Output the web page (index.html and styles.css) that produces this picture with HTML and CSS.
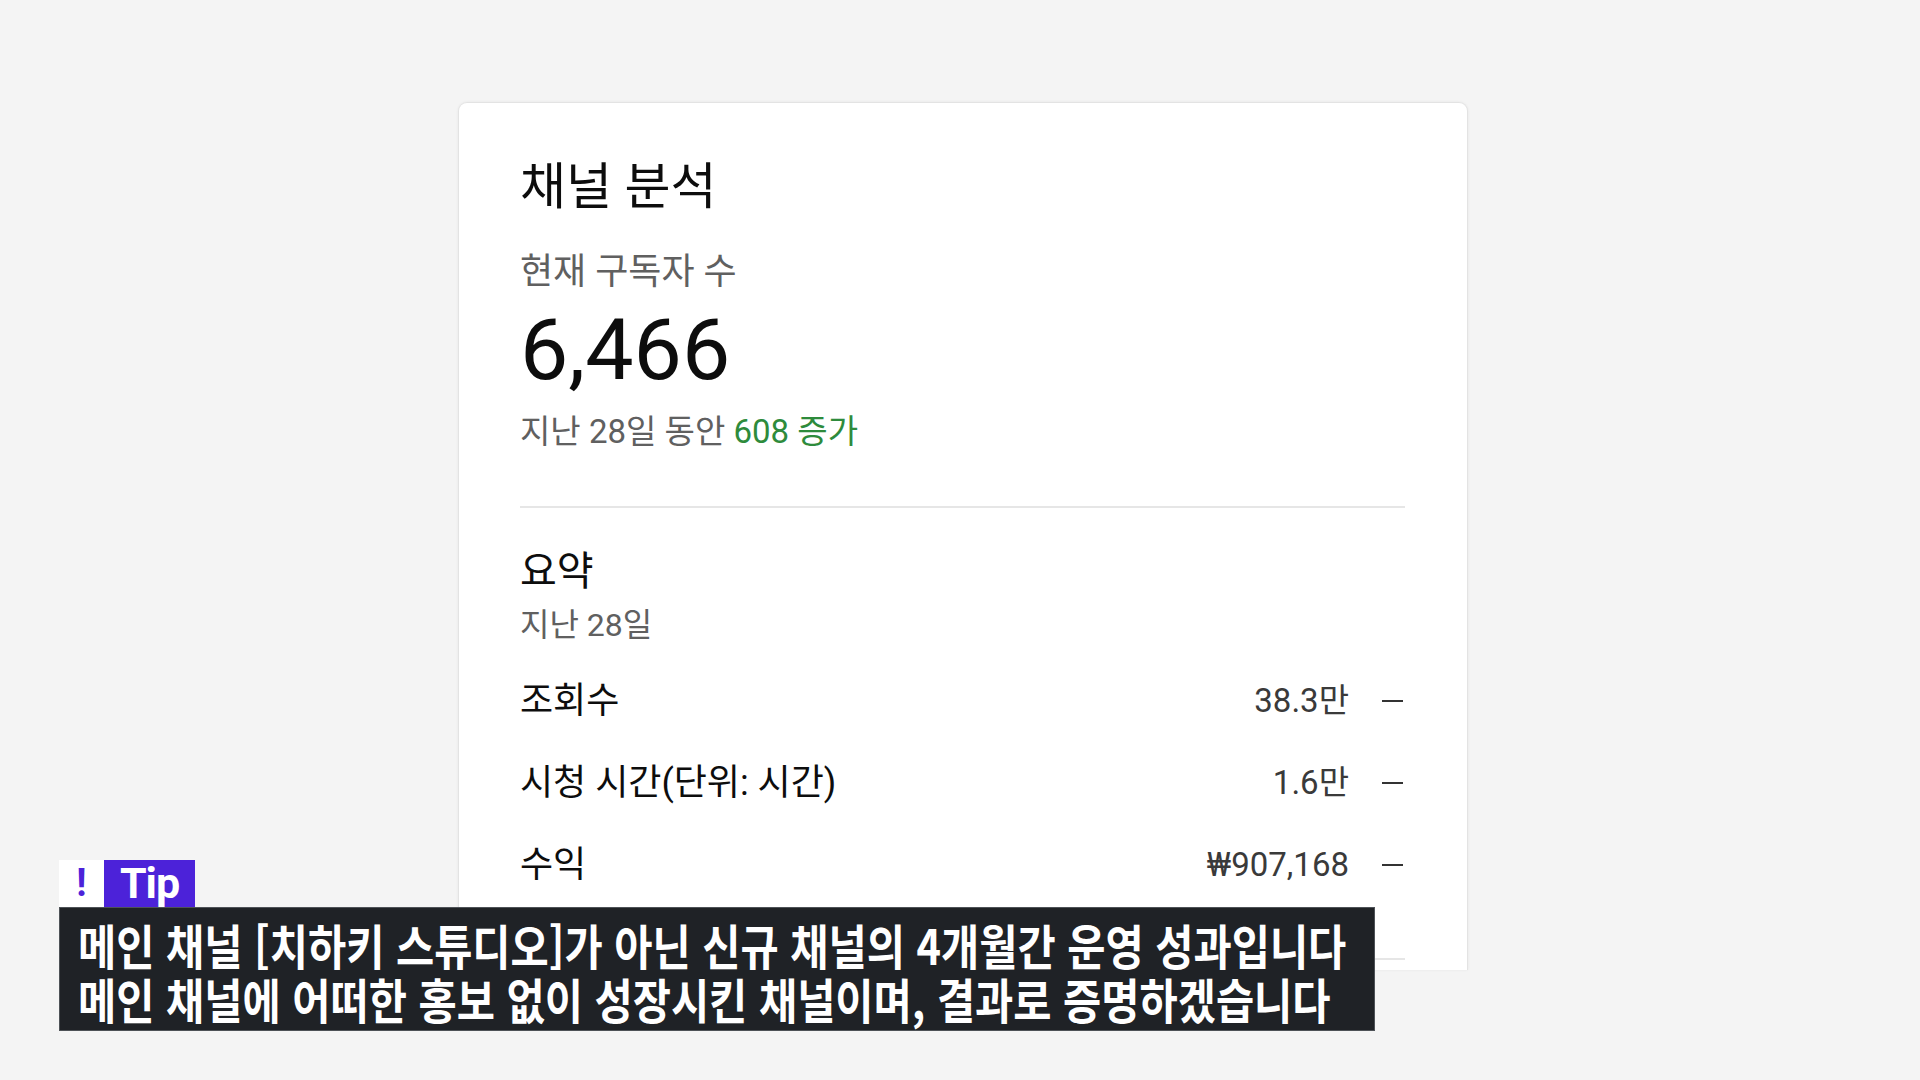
FILE: index.html
```html
<!DOCTYPE html>
<html lang="ko">
<head>
    <meta charset="UTF-8">
    <meta name="viewport" content="width=device-width, initial-scale=1.0">
    <title>채널 분석</title>
    <link rel="stylesheet" href="styles.css">
</head>
<body>
    <div class="card">
        <h1 class="title">채널 분석</h1>
        <div class="sub-label">현재 구독자 수</div>
        <div class="big-count">6,466</div>
        <div class="change">지난 28일 동안 <span class="up">608 증가</span></div>

        <div class="divider"></div>

        <h2 class="section-title">요약</h2>
        <div class="period">지난 28일</div>

        <div class="metrics">
            <div class="metric-row">
                <span class="metric-label">조회수</span>
                <span class="metric-value">38.3만</span>
                <span class="trend"></span>
            </div>
            <div class="metric-row">
                <span class="metric-label">시청 시간(단위: 시간)</span>
                <span class="metric-value">1.6만</span>
                <span class="trend"></span>
            </div>
            <div class="metric-row">
                <span class="metric-label">수익</span>
                <span class="metric-value">₩907,168</span>
                <span class="trend"></span>
            </div>
        </div>

        <div class="divider bottom"></div>
    </div>

    <div class="caption">
        <div class="tip-row">
            <span class="tip-mark">!</span>
            <span class="tip-label">Tip</span>
        </div>
        <div class="caption-box">
            <p class="caption-line">메인 채널 [치하키 스튜디오]가 아닌 신규 채널의 4개월간 운영 성과입니다</p>
            <p class="caption-line">메인 채널에 어떠한 홍보 없이 성장시킨 채널이며, 결과로 증명하겠습니다</p>
        </div>
    </div>
</body>
</html>
```

FILE: styles.css
```css
html, body {
    margin: 0;
    height: 1080px;
    overflow: hidden;
}
body {
    position: relative;
    background-color: #f4f4f4;
    font-family: Roboto, "Noto Sans CJK KR", sans-serif;
    color: #0d0d0d;
}
.card {
    box-sizing: border-box;
    width: 1010px;
    height: 868px;
    margin: 102px 0 0 458px;
    padding: 56px 62px 0 61px;
    background: white;
    border: 1px solid #e3e3e3;
    border-bottom: none;
    border-radius: 9px 9px 0 0;
    box-shadow: 0 0 3px rgba(0, 0, 0, 0.06);
    overflow: hidden;
}
.title {
    margin: 0;
    font-size: 50px;
    font-weight: 400;
    line-height: 56px;
}
.sub-label {
    margin-top: 37px;
    font-size: 36px;
    line-height: 40px;
    color: #606060;
}
.big-count {
    margin-top: 13px;
    font-size: 86px;
    line-height: 90px;
    color: #0d0d0d;
}
.change {
    margin-top: 17px;
    font-size: 33px;
    line-height: 40px;
    color: #606060;
}
.up {
    color: #2e8b3c;
}
.divider {
    margin-top: 54px;
    height: 2px;
    background: #e6e6e6;
}
.divider.bottom {
    margin-top: 52px;
}
.section-title {
    margin: 42px 0 0;
    font-size: 40px;
    font-weight: 400;
    line-height: 44px;
}
.period {
    margin-top: 11px;
    font-size: 32px;
    line-height: 40px;
    color: #606060;
}
.metrics {
    margin-top: 15px;
}
.metric-row {
    display: flex;
    align-items: center;
    height: 82px;
    line-height: 82px;
}
.metric-label {
    flex: 1;
    font-size: 36px;
}
.metric-value {
    font-size: 33px;
    color: #3a3a3a;
}
.trend {
    width: 21px;
    height: 2px;
    margin: 0 2px 0 33px;
    background: #333;
}

/* subtitle overlay from the video */
.caption {
    position: absolute;
    left: 59px;
    top: 860px;
}
.tip-row {
    display: flex;
    height: 47px;
}
.tip-mark {
    width: 45px;
    background: white;
    color: #4c22d9;
    font: 700 38px/47px Roboto, sans-serif;
    text-align: center;
}
.tip-label {
    width: 91px;
    background: #4c22d9;
    color: white;
    font: 700 43px/47px Roboto, sans-serif;
    letter-spacing: -1px;
    text-align: center;
}
.caption-box {
    box-sizing: border-box;
    width: 1316px;
    height: 124px;
    padding: 9px 0 0 18px;
    background: #1f2226;
    border: 1px solid #4e5257;
}
.caption-line {
    margin: 0;
    color: white;
    font-family: "Noto Sans CJK KR", sans-serif;
    font-size: 48px;
    font-weight: 700;
    line-height: 54px;
    white-space: nowrap;
    transform: scaleX(0.865);
    transform-origin: left center;
}
```
